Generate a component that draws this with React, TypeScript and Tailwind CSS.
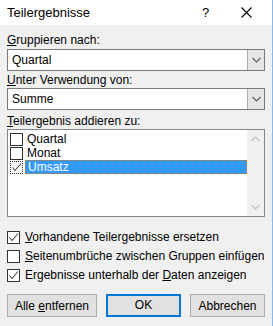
import React from "react"

const font = { fontFamily: '"Liberation Sans", Arial, sans-serif' }

function Check() {
  return (
    <svg width="11" height="11" viewBox="0 0 11 11" className="block">
      <polyline points="1.5,5.5 4,8.5 10,1.5" fill="none" stroke="#444" strokeWidth="1.1" />
    </svg>
  )
}

function Chevron({ up = false, color = "#333" }: { up?: boolean; color?: string }) {
  return (
    <svg width="9" height="6" viewBox="0 0 9 6" className="block">
      <polyline
        points={up ? "0.5,5 4.5,1 8.5,5" : "0.5,1 4.5,5 8.5,1"}
        fill="none"
        stroke={color}
        strokeWidth="1.2"
      />
    </svg>
  )
}

function Combo({ value }: { value: string }) {
  return (
    <div className="flex h-[22px] border border-[#7a7a7a] bg-white">
      <div className="flex-1 pl-[4px] leading-[20px]">{value}</div>
      <div className="flex w-[17px] items-center justify-center border-l border-[#acacac] bg-[#e5e5e5]">
        <Chevron color="#606060" />
      </div>
    </div>
  )
}

function Box({ checked, dotted = false }: { checked: boolean; dotted?: boolean }) {
  return (
    <div
      className={
        dotted
          ? "flex h-[13px] w-[13px] shrink-0 items-center justify-center border border-dotted border-[#333] bg-white"
          : "flex h-[13px] w-[13px] shrink-0 items-center justify-center border border-[#333] bg-white"
      }
    >
      {checked && <Check />}
    </div>
  )
}

export default function App() {
  return (
    <div className="h-[326px] w-[273px] overflow-hidden whitespace-nowrap border-r border-[#8cb8e4] bg-[#f0f0f0] text-[12px] text-black" style={font}>
      {/* Title bar */}
      <div className="flex h-[25px] items-center bg-white pl-[7px]">
        <div className="flex-1 text-[13px] leading-[15px]">Teilergebnisse</div>
        <div className="w-[39px] text-[13px] leading-[15px]">?</div>
        <div className="mr-[20px] flex w-[11px] items-center">
          <svg width="11" height="11" viewBox="0 0 11 11">
            <path d="M0.5 0.5 L10.5 10.5 M10.5 0.5 L0.5 10.5" stroke="#000" strokeWidth="1.1" />
          </svg>
        </div>
      </div>

      <div className="flex flex-col px-[7px]">
        <div className="mt-[8px] h-[16px] leading-[15px]">
          <u>G</u>ruppieren nach:
        </div>
        <Combo value="Quartal" />

        <div className="mt-[4px] h-[13px] leading-[11px]">
          <u>U</u>nter Verwendung von:
        </div>
        <Combo value="Summe" />

        <div className="mt-[4px] h-[15px] leading-[14px]">
          <u>T</u>eilergebnis addieren zu:
        </div>
        <div className="flex h-[88px] border border-[#828790] bg-white">
          <div className="flex flex-1 flex-col pt-[2px] pl-[2px]">
            <div className="flex h-[14px] items-center">
              <Box checked={false} />
              <span className="ml-[4px] leading-[14px]">Quartal</span>
            </div>
            <div className="flex h-[14px] items-center">
              <Box checked={false} />
              <span className="ml-[4px] leading-[14px]">Monat</span>
            </div>
            <div className="flex h-[14px] items-center">
              <Box checked dotted />
              <span className="ml-[2px] h-[14px] flex-1 border border-dotted border-[#c87a2a] bg-[#3399ff] pl-[2px] leading-[12px] text-white">
                Umsatz
              </span>
            </div>
          </div>
          <div className="flex w-[17px] flex-col items-center justify-between bg-[#f0f0f0] py-[6px]">
            <Chevron up color="#c2c2c2" />
            <Chevron color="#c2c2c2" />
          </div>
        </div>

        <div className="mt-[14px] flex flex-col gap-[6px]">
          <div className="flex h-[13px] items-center">
            <Box checked />
            <span className="ml-[5px] leading-[13px]">
              <u>V</u>orhandene Teilergebnisse ersetzen
            </span>
          </div>
          <div className="flex h-[13px] items-center">
            <Box checked={false} />
            <span className="ml-[5px] leading-[13px]">
              <u>S</u>eitenumbrüche zwischen Gruppen einfügen
            </span>
          </div>
          <div className="flex h-[13px] items-center">
            <Box checked />
            <span className="ml-[5px] leading-[13px]">
              Ergebnisse unterhalb der <u>D</u>aten anzeigen
            </span>
          </div>
        </div>

        <div className="mt-[12px] flex justify-between">
          <button className="h-[23px] w-[90px] border border-[#adadad] bg-[#e1e1e1] leading-[20px]">
            Alle <u>e</u>ntfernen
          </button>
          <button className="h-[23px] w-[75px] border-2 border-[#0078d7] bg-[#e1e1e1] leading-[19px]">
            OK
          </button>
          <button className="h-[23px] w-[75px] border border-[#adadad] bg-[#e1e1e1] leading-[20px]">
            Abbrechen
          </button>
        </div>
      </div>
    </div>
  )
}
